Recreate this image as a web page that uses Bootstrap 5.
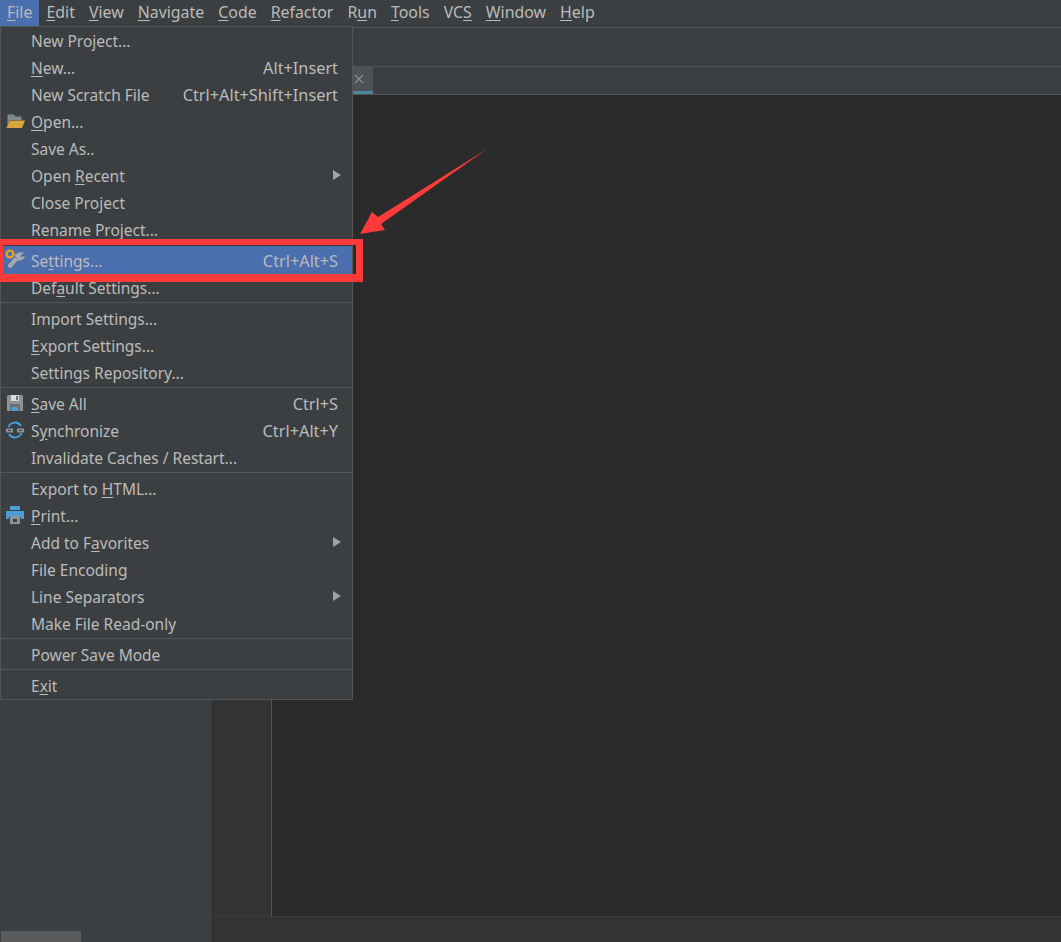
<!DOCTYPE html>
<html lang="en">
<head>
<meta charset="utf-8">
<title>File menu</title>
<link href="https://cdn.jsdelivr.net/npm/bootstrap@5.3.0/dist/css/bootstrap.min.css" rel="stylesheet">
<style>
html,body{height:100%;margin:0;overflow:hidden;background:#3c3f41}
body{font-family:"Noto Sans","Liberation Sans",sans-serif;font-size:15px;color:#bbb}
.ide{height:942px;position:relative}
.menubar{height:27px;background:#3c3f41;line-height:25px;font-size:15.9px}
.menubar a{color:#bbb;text-decoration:none;padding:0 7px;height:26px;display:block}
.menubar a.open-top{background:#4b6eaf}
.menubar u{text-underline-offset:2px}
.shell{height:915px}
.leftpanel{width:213px;background:#3c3f41;border-right:1px solid #2b2b2b;position:relative}
.thumb{position:absolute;left:1px;bottom:0;width:80px;height:11px;background:#595b5d}
.toolrow{height:40px;background:#3c3f41;border-top:1px solid #555;border-bottom:1px solid #555}
.tabrow{height:28px;background:#3c3f41;border-bottom:1px solid #555;padding-left:132px}
.edtab{width:28px;height:27px;background:#4e5254;border-bottom:3px solid #4a88a0}
.edarea{min-height:0}
.gutter{width:59px;background:#313335;border-right:1px solid #555}
.codepane{background:#2b2b2b}
.statusrow{height:26px;background:#313335;border-top:1px solid #3a3a3a}
.filemenu.dropdown-menu{position:absolute;left:0;top:26px;width:353px;margin:0;padding:0;border:1px solid #555;border-radius:0;background:#3c3f41;font-size:15.5px;color:#bbb;min-width:0;z-index:5}
.filemenu .dropdown-item{height:27px;padding:1px 14px 0 30px;color:#bbb;display:flex;justify-content:space-between;align-items:center;position:relative;line-height:26px;background:transparent}
.filemenu .dropdown-item.active{background:#4b6eaf;color:#bbb;height:28px;margin-top:-1px}
.filemenu u{text-underline-offset:2px}
.filemenu .dropdown-divider{margin:1px 0 2px;border-top:1px solid #555;opacity:1}
.keys{font-size:16.3px}
.mi{position:absolute;left:4px;top:3px;width:20px;height:20px}
.subcaret{width:0;height:0;border-left:8px solid #a0a3a6;border-top:5.5px solid transparent;border-bottom:5.5px solid transparent;margin-right:-3px;margin-top:-2px}
.redframe{position:absolute;left:0;top:239px;width:363px;height:43px;border-style:solid;border-color:#ff3a3a;border-width:6px 7px 8px 3px;z-index:6;pointer-events:none}
.redarrow{position:absolute;left:350px;top:140px;width:150px;height:100px;z-index:6}
</style>
</head>
<body>
<div class="ide d-flex flex-column">
  <nav class="menubar d-flex flex-shrink-0">
    <a class="open-top" href="#"><u>F</u>ile</a>
    <a href="#"><u>E</u>dit</a>
    <a href="#"><u>V</u>iew</a>
    <a href="#"><u>N</u>avigate</a>
    <a href="#"><u>C</u>ode</a>
    <a href="#"><u>R</u>efactor</a>
    <a href="#">R<u>u</u>n</a>
    <a href="#"><u>T</u>ools</a>
    <a href="#">VC<u>S</u></a>
    <a href="#"><u>W</u>indow</a>
    <a href="#"><u>H</u>elp</a>
  </nav>
  <div class="shell d-flex flex-grow-1">
    <aside class="leftpanel flex-shrink-0"><div class="thumb"></div></aside>
    <main class="d-flex flex-column flex-grow-1">
      <div class="toolrow flex-shrink-0"></div>
      <div class="tabrow flex-shrink-0 d-flex">
        <div class="edtab d-flex align-items-center justify-content-center">
          <svg width="10" height="10" viewBox="0 0 10 10"><path d="M1 1l8 8M9 1l-8 8" stroke="#8a8d90" stroke-width="1.2" fill="none"/></svg>
        </div>
      </div>
      <div class="edarea d-flex flex-grow-1">
        <div class="gutter flex-shrink-0"></div>
        <div class="codepane flex-grow-1"></div>
      </div>
      <div class="statusrow flex-shrink-0"></div>
    </main>
  </div>

  <ul class="filemenu dropdown-menu show list-unstyled">
    <li><a class="dropdown-item" href="#"><span>New Project...</span></a></li>
    <li><a class="dropdown-item" href="#"><span><u>N</u>ew...</span><span class="keys">Alt+Insert</span></a></li>
    <li><a class="dropdown-item" href="#"><span>New Scratch File</span><span class="keys">Ctrl+Alt+Shift+Insert</span></a></li>
    <li><a class="dropdown-item" href="#">
      <svg class="mi" viewBox="0 0 20 20"><path d="M2.500 16V3.500h6l2 2h6V9H5z" fill="#7f8b91"/><path d="M1.500 17l3.500-7.500h15L17 17z" fill="#d8a43c"/></svg>
      <span><u>O</u>pen...</span></a></li>
    <li><a class="dropdown-item" href="#"><span>Save As..</span></a></li>
    <li><a class="dropdown-item" href="#"><span>Open <u>R</u>ecent</span><span class="subcaret"></span></a></li>
    <li><a class="dropdown-item" href="#"><span>Close Project</span></a></li>
    <li><a class="dropdown-item" href="#"><span>Rename Project...</span></a></li>
    <li><hr class="dropdown-divider"></li>
    <li><a class="dropdown-item active" href="#">
      <svg class="mi" viewBox="0 0 20 20"><path d="M3 16l7-8 3 3-7 8-3-1zM9.500 6l4-2.500h6l-4 3 .5 1.500 4-1-2 3.500-4.500 1.500z" fill="#a6a9ab"/><circle cx="5" cy="5" r="3.400" fill="none" stroke="#e5a323" stroke-width="2.400"/></svg>
      <span>Se<u>t</u>tings...</span><span class="keys">Ctrl+Alt+S</span></a></li>
    <li><a class="dropdown-item" href="#"><span>Def<u>a</u>ult Settings...</span></a></li>
    <li><hr class="dropdown-divider"></li>
    <li><a class="dropdown-item" href="#"><span>Import Settings...</span></a></li>
    <li><a class="dropdown-item" href="#"><span><u>E</u>xport Settings...</span></a></li>
    <li><a class="dropdown-item" href="#"><span>Settings Repository...</span></a></li>
    <li><hr class="dropdown-divider"></li>
    <li><a class="dropdown-item" href="#">
      <svg class="mi" viewBox="0 0 20 20"><path d="M3 2h14l1 1v15H2V3z" fill="#8d9296"/><path d="M6 2h8v6H6z" fill="#d9dadb"/><path d="M11 3h2v4h-2z" fill="#6d7276"/><path d="M5 11h10v7H5z" fill="#6c7175"/><path d="M7 14h6v4H7z" fill="#4a9fd6"/></svg>
      <span><u>S</u>ave All</span><span class="keys">Ctrl+S</span></a></li>
    <li><a class="dropdown-item" href="#">
      <svg class="mi" viewBox="0 0 20 20"><path d="M3.500 7A7 7 0 0 1 16 6" fill="none" stroke="#4a9fd6" stroke-width="2"/><path d="M16.500 13A7 7 0 0 1 4 14" fill="none" stroke="#4a9fd6" stroke-width="2"/><path d="M1 8.500h7v4H1zM12 8.500h7v4h-7z" fill="#8d9296"/><path d="M3 10h3v1H3zM14 10h3v1h-3z" fill="#3c3f41"/></svg>
      <span>S<u>y</u>nchronize</span><span class="keys">Ctrl+Alt+Y</span></a></li>
    <li><a class="dropdown-item" href="#"><span>Invalidate Caches / Restart...</span></a></li>
    <li><hr class="dropdown-divider"></li>
    <li><a class="dropdown-item" href="#"><span>Export to <u>H</u>TML...</span></a></li>
    <li><a class="dropdown-item" href="#">
      <svg class="mi" viewBox="0 0 20 20"><path d="M5 1h10v4H5z" fill="#4a9fd6"/><path d="M1 6h18v8h-3v-2H4v2H1z" fill="#4a9fd6"/><path d="M5 11h10v8H5z" fill="#8d9296"/><path d="M8 14h4v3H8z" fill="#3c3f41"/></svg>
      <span><u>P</u>rint...</span></a></li>
    <li><a class="dropdown-item" href="#"><span>Add to F<u>a</u>vorites</span><span class="subcaret"></span></a></li>
    <li><a class="dropdown-item" href="#"><span>File Encoding</span></a></li>
    <li><a class="dropdown-item" href="#"><span>Line Separators</span><span class="subcaret"></span></a></li>
    <li><a class="dropdown-item" href="#"><span>Make File Read-only</span></a></li>
    <li><hr class="dropdown-divider"></li>
    <li><a class="dropdown-item" href="#"><span>Power Save Mode</span></a></li>
    <li><hr class="dropdown-divider"></li>
    <li><a class="dropdown-item" href="#"><span>E<u>x</u>it</span></a></li>
  </ul>

  <div class="redframe"></div>
  <svg class="redarrow" viewBox="350 140 150 100"><polygon points="487,149 378,217 372,212 360,234 385,230 381,224" fill="#ff3a3a"/></svg>
</div>
<script src="https://cdn.jsdelivr.net/npm/bootstrap@5.3.0/dist/js/bootstrap.bundle.min.js"></script>
</body>
</html>
